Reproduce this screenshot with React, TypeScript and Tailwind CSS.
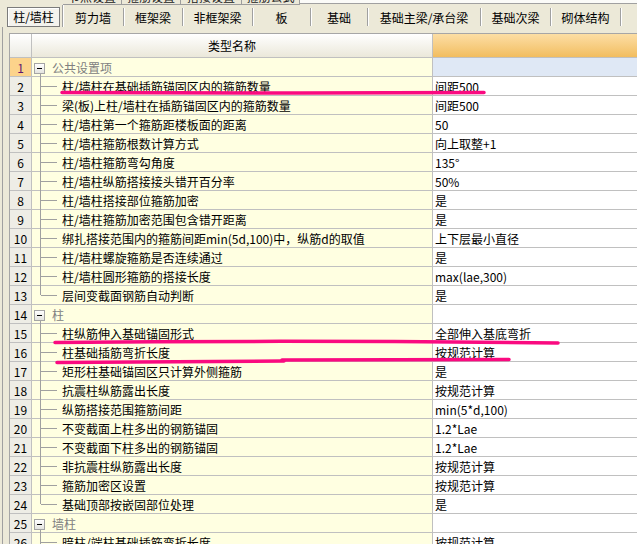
import React from "react";

type Row = { n: number; name: string; value?: string; g?: boolean; last?: boolean };

const rows: Row[] = [
  { n: 1, name: "公共设置项", g: true },
  { n: 2, name: "柱/墙柱在基础插筋锚固区内的箍筋数量", value: "间距500" },
  { n: 3, name: "梁(板)上柱/墙柱在插筋锚固区内的箍筋数量", value: "间距500" },
  { n: 4, name: "柱/墙柱第一个箍筋距楼板面的距离", value: "50" },
  { n: 5, name: "柱/墙柱箍筋根数计算方式", value: "向上取整+1" },
  { n: 6, name: "柱/墙柱箍筋弯勾角度", value: "135°" },
  { n: 7, name: "柱/墙柱纵筋搭接接头错开百分率", value: "50%" },
  { n: 8, name: "柱/墙柱搭接部位箍筋加密", value: "是" },
  { n: 9, name: "柱/墙柱箍筋加密范围包含错开距离", value: "是" },
  { n: 10, name: "绑扎搭接范围内的箍筋间距min(5d,100)中，纵筋d的取值", value: "上下层最小直径" },
  { n: 11, name: "柱/墙柱螺旋箍筋是否连续通过", value: "是" },
  { n: 12, name: "柱/墙柱圆形箍筋的搭接长度", value: "max(lae,300)" },
  { n: 13, name: "层间变截面钢筋自动判断", value: "是", last: true },
  { n: 14, name: "柱", g: true },
  { n: 15, name: "柱纵筋伸入基础锚固形式", value: "全部伸入基底弯折" },
  { n: 16, name: "柱基础插筋弯折长度", value: "按规范计算" },
  { n: 17, name: "矩形柱基础锚固区只计算外侧箍筋", value: "是" },
  { n: 18, name: "抗震柱纵筋露出长度", value: "按规范计算" },
  { n: 19, name: "纵筋搭接范围箍筋间距", value: "min(5*d,100)" },
  { n: 20, name: "不变截面上柱多出的钢筋锚固", value: "1.2*Lae" },
  { n: 21, name: "不变截面下柱多出的钢筋锚固", value: "1.2*Lae" },
  { n: 22, name: "非抗震柱纵筋露出长度", value: "按规范计算" },
  { n: 23, name: "箍筋加密区设置", value: "按规范计算" },
  { n: 24, name: "基础顶部按嵌固部位处理", value: "是", last: true },
  { n: 25, name: "墙柱", g: true },
  { n: 26, name: "暗柱/端柱基础插筋弯折长度", value: "按规范计算" },
];

const tabs: { label: string; w: string }[] = [
  { label: "剪力墙", w: "w-[61px]" },
  { label: "框架梁", w: "w-[59px]" },
  { label: "非框架梁", w: "w-[70px]" },
  { label: "板", w: "w-[58px]" },
  { label: "基础", w: "w-[57px]" },
  { label: "基础主梁/承台梁", w: "w-[113px]" },
  { label: "基础次梁", w: "w-[70px]" },
  { label: "砌体结构", w: "w-[70px]" },
];

const topTabs: { label: string; w: string }[] = [
  { label: "节点设置", w: "w-[59px]" },
  { label: "箍筋设置", w: "w-[59px]" },
  { label: "搭接设置", w: "w-[61px]" },
  { label: "箍筋公式", w: "w-[58px]" },
];

function NameCell({ r }: { r: Row }) {
  if (r.g) {
    return (
      <div className="relative w-[401px] shrink-0 h-full border-r border-[#c0c0c0] bg-[#ffffe1] flex items-center pl-[20px] pt-[2px] text-[#808080]">
        <span className="absolute left-[2px] top-[5px] w-[11px] h-[11px] border border-[#a5a5a5] bg-gradient-to-b from-white to-[#e4e4e0]">
          <span className="absolute left-[2px] top-[4px] w-[5px] h-[1px] bg-black" />
        </span>
        <span className="absolute left-[8px] top-[16px] -bottom-px w-px bg-[#a0a0a0]" />
        {r.name}
      </div>
    );
  }
  return (
    <div className="relative w-[401px] shrink-0 h-full border-r border-[#c0c0c0] bg-[#ffffe1] flex items-center pl-[30px] pt-[2px] whitespace-nowrap overflow-visible">
      <span className={r.last ? "absolute left-[8px] -top-px h-[10px] w-px bg-[#a0a0a0]" : "absolute left-[8px] -top-px -bottom-px w-px bg-[#a0a0a0]"} />
      <span className="absolute left-[9px] top-[9px] w-[16px] h-px bg-[#a0a0a0]" />
      {r.name}
    </div>
  );
}

export default function App() {
  return (
    <div className="relative w-[637px] h-[544px] overflow-hidden bg-[#ece9d8] text-[12px] leading-[14px] text-black font-['Noto_Sans_CJK_SC','Noto_Sans',sans-serif]">
      {/* partial upper tab row */}
      <div className="flex h-[5px] overflow-hidden">
        <div className="w-[63px] shrink-0" />
        {topTabs.map((t) => (
          <div key={t.label} className={`${t.w} shrink-0 h-[5px] border-r border-b border-[#9d9d9d] bg-[#ece9d8] overflow-hidden flex justify-center`}>
            <span className="-mt-[10px] text-[#222]">{t.label}</span>
          </div>
        ))}
        <div className="flex-1 h-[4px] bg-[#fbfbf8] border-b border-[#a0a0a0]" />
      </div>

      {/* tab bar */}
      <div className="flex h-[22px] pl-[7px]">
        <div className="w-[56px] shrink-0 h-full pt-[2px] flex border-r border-[#a0a0a0] shadow-[1px_0_0_#fff]">
          <div className="w-[53px] h-[20px] border border-[#7b7b7b] bg-[#f4f3ee] flex items-center justify-center shadow-[inset_1px_1px_0_#fff]">
            柱/墙柱
          </div>
        </div>
        {tabs.map((t) => (
          <div key={t.label} className={`${t.w} shrink-0 flex items-center justify-center mt-[3px] h-[18px] border-r border-[#a0a0a0] shadow-[1px_0_0_#fff] pt-[1px]`}>
            {t.label}
          </div>
        ))}
      </div>

      {/* panel */}
      <div className="ml-[2px] border-l border-[#a0a0a0] pt-[6px] pl-[6px] h-[517px]">
        <div className="border-l border-t border-[#a6a6a6] w-[700px]">
          {/* header */}
          <div className="flex h-[24px] border-b border-[#c0c0c0]">
            <div className="w-[22px] shrink-0 h-full border-r border-[#c0c0c0] bg-gradient-to-b from-white to-[#ecebe3]" />
            <div className="w-[401px] shrink-0 h-full border-r border-[#c0c0c0] bg-gradient-to-b from-white to-[#ebe8da] flex items-center justify-center pt-[1px]">
              类型名称
            </div>
            <div className="flex-1 h-full bg-gradient-to-b from-[#fcdea4] to-[#f2bd5e]" />
          </div>
          {rows.map((r) => (
            <div key={r.n} className="flex h-[19px] border-b border-[#c0c0c0]">
              <div
                className={`w-[22px] shrink-0 h-full border-r border-[#c0c0c0] flex items-center justify-center pt-[2px] ${
                  r.n === 1 ? "bg-[#fcd38b] text-[#5d166f]" : "bg-[#eeede6]"
                }`}
              >
                {r.n}
              </div>
              <NameCell r={r} />
              <div className={`flex-1 h-full flex items-center pl-[2px] pt-[2px] whitespace-nowrap ${r.n === 1 ? "bg-[#dfe8f5]" : "bg-white"}`}>
                {r.value ?? ""}
              </div>
            </div>
          ))}
        </div>
      </div>

      {/* hand-drawn annotation strokes */}
      <svg className="absolute left-0 top-0 pointer-events-none" width="637" height="544" viewBox="0 0 637 544">
        <g stroke="#fa0a80" strokeWidth="3.5" strokeLinecap="round" fill="none">
          <path d="M62 92.5 L300 93 L484 92.5" />
          <path d="M55 342.5 Q300 340 558 343" />
          <path d="M57 362.5 L284 361" />
          <path d="M282 360 L509 359.5" />
        </g>
      </svg>
    </div>
  );
}
